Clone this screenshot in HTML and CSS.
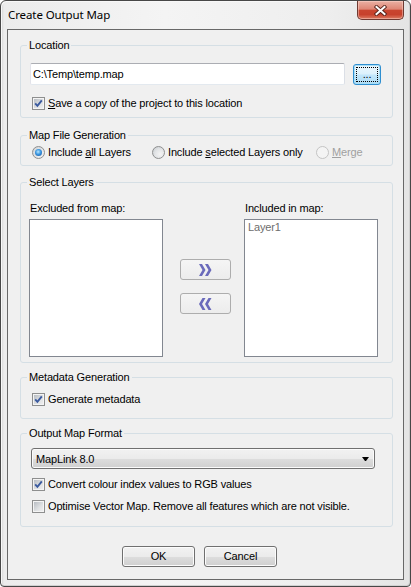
FILE: index.html
```html
<!DOCTYPE html>
<html lang="en">
<head>
<meta charset="utf-8">
<title>Create Output Map</title>
<link rel="stylesheet" href="styles.css">
</head>
<body>
<div class="window">
  <div class="titlebar">
    <span class="title">Create Output Map</span>
    <button class="close" aria-label="Close">
      <svg width="13" height="11" viewBox="0 0 13 11">
        <path d="M2.5 2 L10.5 9 M10.5 2 L2.5 9" stroke="#55231b" stroke-width="3.8" stroke-linecap="square" fill="none"/>
        <path d="M2.5 2 L10.5 9 M10.5 2 L2.5 9" stroke="#ffffff" stroke-width="2" stroke-linecap="square" fill="none"/>
      </svg>
    </button>
  </div>

  <div class="client">
    <fieldset class="group group-location">
      <legend>Location</legend>
      <div class="group-body body-location">
        <div class="path-row">
          <div class="textbox">C:\Temp\temp.map</div>
          <button class="btn btn-browse"><span class="focus-rect">...</span></button>
        </div>
        <div class="check-row row-save">
          <span class="cb"><svg width="11" height="11" viewBox="0 0 11 11"><path d="M2.2 5.4 L4.4 7.8 L8.8 2.4" stroke="#3a5a9f" stroke-width="1.9" fill="none"/></svg></span>
          <span><u>S</u>ave a copy of the project to this location</span>
        </div>
      </div>
    </fieldset>

    <fieldset class="group group-mapfile">
      <legend>Map File Generation</legend>
      <div class="group-body body-mapfile">
        <div class="radio-row">
          <div class="radio-item item-all"><span class="radio checked"><span class="dot"></span></span><span>Include <u>a</u>ll Layers</span></div>
          <div class="radio-item item-selected"><span class="radio"></span><span>Include <u>s</u>elected Layers only</span></div>
          <div class="radio-item disabled"><span class="radio"></span><span><u>M</u>erge</span></div>
        </div>
      </div>
    </fieldset>

    <fieldset class="group group-layers">
      <legend>Select Layers</legend>
      <div class="group-body layers">
        <div class="list-label">Excluded from map:</div>
        <div></div>
        <div class="list-label">Included in map:</div>
        <div class="listbox"></div>
        <div class="transfer">
          <button class="btn-move" aria-label="Add">
            <svg width="13" height="12" viewBox="0 0 13 12"><polygon points="0,0 3,0 6.5,6 3,12 0,12 3.5,6" fill="#6a6abb"/><polygon points="6,0 9,0 12.5,6 9,12 6,12 9.5,6" fill="#6a6abb"/></svg>
          </button>
          <button class="btn-move" aria-label="Remove">
            <svg width="13" height="12" viewBox="0 0 13 12"><polygon points="6.5,0 3.5,0 0,6 3.5,12 6.5,12 3,6" fill="#6a6abb"/><polygon points="12.5,0 9.5,0 6,6 9.5,12 12.5,12 9,6" fill="#6a6abb"/></svg>
          </button>
        </div>
        <div class="listbox"><div class="list-item">Layer1</div></div>
      </div>
    </fieldset>

    <fieldset class="group group-metadata">
      <legend>Metadata Generation</legend>
      <div class="group-body body-metadata">
        <div class="check-row">
          <span class="cb"><svg width="11" height="11" viewBox="0 0 11 11"><path d="M2.2 5.4 L4.4 7.8 L8.8 2.4" stroke="#3a5a9f" stroke-width="1.9" fill="none"/></svg></span>
          <span>Generate metadata</span>
        </div>
      </div>
    </fieldset>

    <fieldset class="group group-output">
      <legend>Output Map Format</legend>
      <div class="group-body body-output">
        <div class="combo">
          <span>MapLink 8.0</span>
          <svg width="7" height="4" viewBox="0 0 7 4"><polygon points="0,0 7,0 4,4 3,4" fill="#000"/></svg>
        </div>
        <div class="check-row row-convert">
          <span class="cb"><svg width="11" height="11" viewBox="0 0 11 11"><path d="M2.2 5.4 L4.4 7.8 L8.8 2.4" stroke="#3a5a9f" stroke-width="1.9" fill="none"/></svg></span>
          <span>Convert colour index values to RGB values</span>
        </div>
        <div class="check-row row-optimise">
          <span class="cb"></span>
          <span>Optimise Vector Map. Remove all features which are not visible.</span>
        </div>
      </div>
    </fieldset>

    <div class="dialog-buttons">
      <button class="btn btn-dialog">OK</button>
      <button class="btn btn-dialog">Cancel</button>
    </div>
  </div>
</div>
</body>
</html>
```

FILE: styles.css
```css
* {
  box-sizing: border-box;
}

html, body {
  margin: 0;
  padding: 0;
}

body {
  width: 411px;
  height: 587px;
  overflow: hidden;
  background: #ffffff;
  font-family: "Liberation Sans", Arial, sans-serif;
  font-size: 11px;
  line-height: 14px;
  letter-spacing: -0.15px;
  color: #000;
}

button {
  font: inherit;
  color: inherit;
  letter-spacing: inherit;
  margin: 0;
  padding: 0;
}

/* ---------- window frame ---------- */
.window {
  width: 411px;
  height: 587px;
  display: flex;
  flex-direction: column;
  padding: 0 6px 6px;
  border: 1px solid #474747;
  border-radius: 6px 6px 4px 4px;
  background: linear-gradient(to right, #d2d2d2 0, #ececec 3px, #f4f4f4 40%, #eeeeee 80%, #e4e4e4 100%);
  box-shadow: inset 1px 1px 0 #f8f8f8, inset -1px -1px 0 #d0d0d0;
}

.titlebar {
  height: 28px;
  flex: none;
  display: flex;
  justify-content: space-between;
  align-items: flex-start;
}

.title {
  padding-left: 1px;
  font-family: "Noto Sans", "Open Sans", sans-serif;
  font-size: 11.5px;
  letter-spacing: -0.1px;
  line-height: 28px;
  color: #000;
}

.close {
  width: 47px;
  height: 19px;
  display: flex;
  align-items: center;
  justify-content: center;
  border: 1px solid #6e3a32;
  border-top: none;
  border-radius: 0 0 5px 5px;
  background: linear-gradient(to bottom, #eab0a3 0%, #de8675 45%, #c9452f 52%, #c7412c 75%, #dc7b62 100%);
  box-shadow: inset 0 0 0 1px rgba(255, 220, 210, 0.45);
}

.client {
  flex: 1;
  display: flex;
  flex-direction: column;
  padding: 8px 10px 0 12px;
  border: 1px solid #686868;
  background: #f0f0f0;
}

/* ---------- group boxes ---------- */
.group {
  margin: 0;
  padding: 0;
  min-width: 0;
  border: 1px solid #d5dfe5;
  border-radius: 3px;
}

.group legend {
  margin-left: 6px;
  padding: 0 2px;
  line-height: 14px;
}

.group-mapfile { margin-top: 10px; }
.group-layers { margin-top: 9px; }
.group-metadata { margin-top: 7px; }
.group-output { margin-top: 7px; }

.body-location { padding: 11px 11px 7px 0; }
.body-mapfile { padding: 3px 0 6px 0; }
.body-metadata { padding: 8px 0 12px 0; }
.body-output { padding: 8px 17px 13px 0; }

/* ---------- location ---------- */
.path-row {
  display: flex;
  align-items: center;
  gap: 8px;
  padding-left: 9px;
}

.textbox {
  flex: 1;
  height: 22px;
  padding: 3px 2px;
  border: 1px solid;
  border-color: #abadb3 #dbdfe6 #e3e9ef #e2e3ea;
  border-radius: 2px;
  background: #fff;
}

.btn-browse {
  width: 28px;
  height: 21px;
  padding: 2px;
  border: 1px solid #2f8fd0;
  border-radius: 3px;
  background: linear-gradient(to bottom, #ecf7fd 0%, #dcf1fc 48%, #c3e7fb 52%, #aedcf5 100%);
  box-shadow: inset 0 0 0 1px #a8def7;
}

.focus-rect {
  display: block;
  height: 100%;
  border: 1px dotted #000;
  line-height: 12px;
  text-align: center;
}

/* ---------- check boxes and radios ---------- */
.check-row {
  display: flex;
  align-items: center;
  gap: 3px;
  height: 14px;
  padding-left: 11px;
}

.row-save { margin-top: 11px; }
.row-convert { margin-top: 8px; }
.row-optimise { margin-top: 8px; }

.cb {
  flex: none;
  width: 13px;
  height: 13px;
  padding: 1px;
  border: 1px solid #8e8f8f;
  background: linear-gradient(135deg, #b8bdc3 0%, #dfe1e3 60%, #eeeeef 100%) content-box, #f4f4f4;
}

.cb svg {
  display: block;
  margin: -1px;
}

.radio-row {
  display: flex;
  height: 14px;
  padding-left: 11px;
}

.radio-item {
  display: flex;
  align-items: center;
  gap: 3px;
}

.item-all { width: 120px; }
.item-selected { width: 164px; }

.radio {
  flex: none;
  width: 13px;
  height: 13px;
  display: flex;
  align-items: center;
  justify-content: center;
  border: 1px solid #8e8f8f;
  border-radius: 50%;
  background: radial-gradient(circle at 65% 65%, #f4f4f4 0%, #e2e4e6 50%, #c5c9cd 100%);
}

.dot {
  width: 7px;
  height: 7px;
  border-radius: 50%;
  background: radial-gradient(circle at 45% 40%, #b8e6ff 0%, #3a97e0 45%, #114c9c 100%);
}

.radio-item.disabled {
  color: #a0a0a0;
}

.radio-item.disabled .radio {
  border-color: #c4c4c4;
  background: #f4f4f4;
}

/* ---------- layers ---------- */
.layers {
  display: grid;
  grid-template-columns: 134px 81px 134px;
  grid-template-rows: 14px 138px;
  row-gap: 4px;
  padding: 12px 14px 5px 8px;
}

.list-label {
  padding-left: 1px;
}

.listbox {
  border: 1px solid #828790;
  background: #fff;
}

.list-item {
  padding-left: 3px;
  color: #6d6d6d;
}

.transfer {
  display: flex;
  flex-direction: column;
  gap: 13px;
  padding: 40px 0 0 17px;
}

.btn-move {
  width: 51px;
  height: 21px;
  display: flex;
  align-items: center;
  justify-content: center;
  border: 1px solid #adadad;
  border-radius: 3px;
  background: linear-gradient(to bottom, #f5f5f5, #ececec);
}

/* ---------- output format ---------- */
.combo {
  height: 21px;
  margin-left: 10px;
  display: flex;
  align-items: center;
  justify-content: space-between;
  padding: 0 5px 0 4px;
  border: 1px solid #707070;
  border-radius: 3px;
  background: linear-gradient(to bottom, #f2f2f2 0%, #ebebeb 50%, #dddddd 51%, #cfcfcf 100%);
  box-shadow: inset 0 0 0 1px #fbfbfb;
}

.combo svg {
  display: block;
}

/* ---------- dialog buttons ---------- */
.dialog-buttons {
  display: flex;
  gap: 9px;
  margin-top: 19px;
  padding-left: 102px;
}

.btn-dialog {
  width: 73px;
  height: 21px;
  border: 1px solid #707070;
  border-radius: 3px;
  background: linear-gradient(to bottom, #f2f2f2 0%, #ebebeb 50%, #dddddd 51%, #cfcfcf 100%);
  box-shadow: inset 0 0 0 1px #fcfcfc;
  line-height: 19px;
  text-align: center;
}
```
